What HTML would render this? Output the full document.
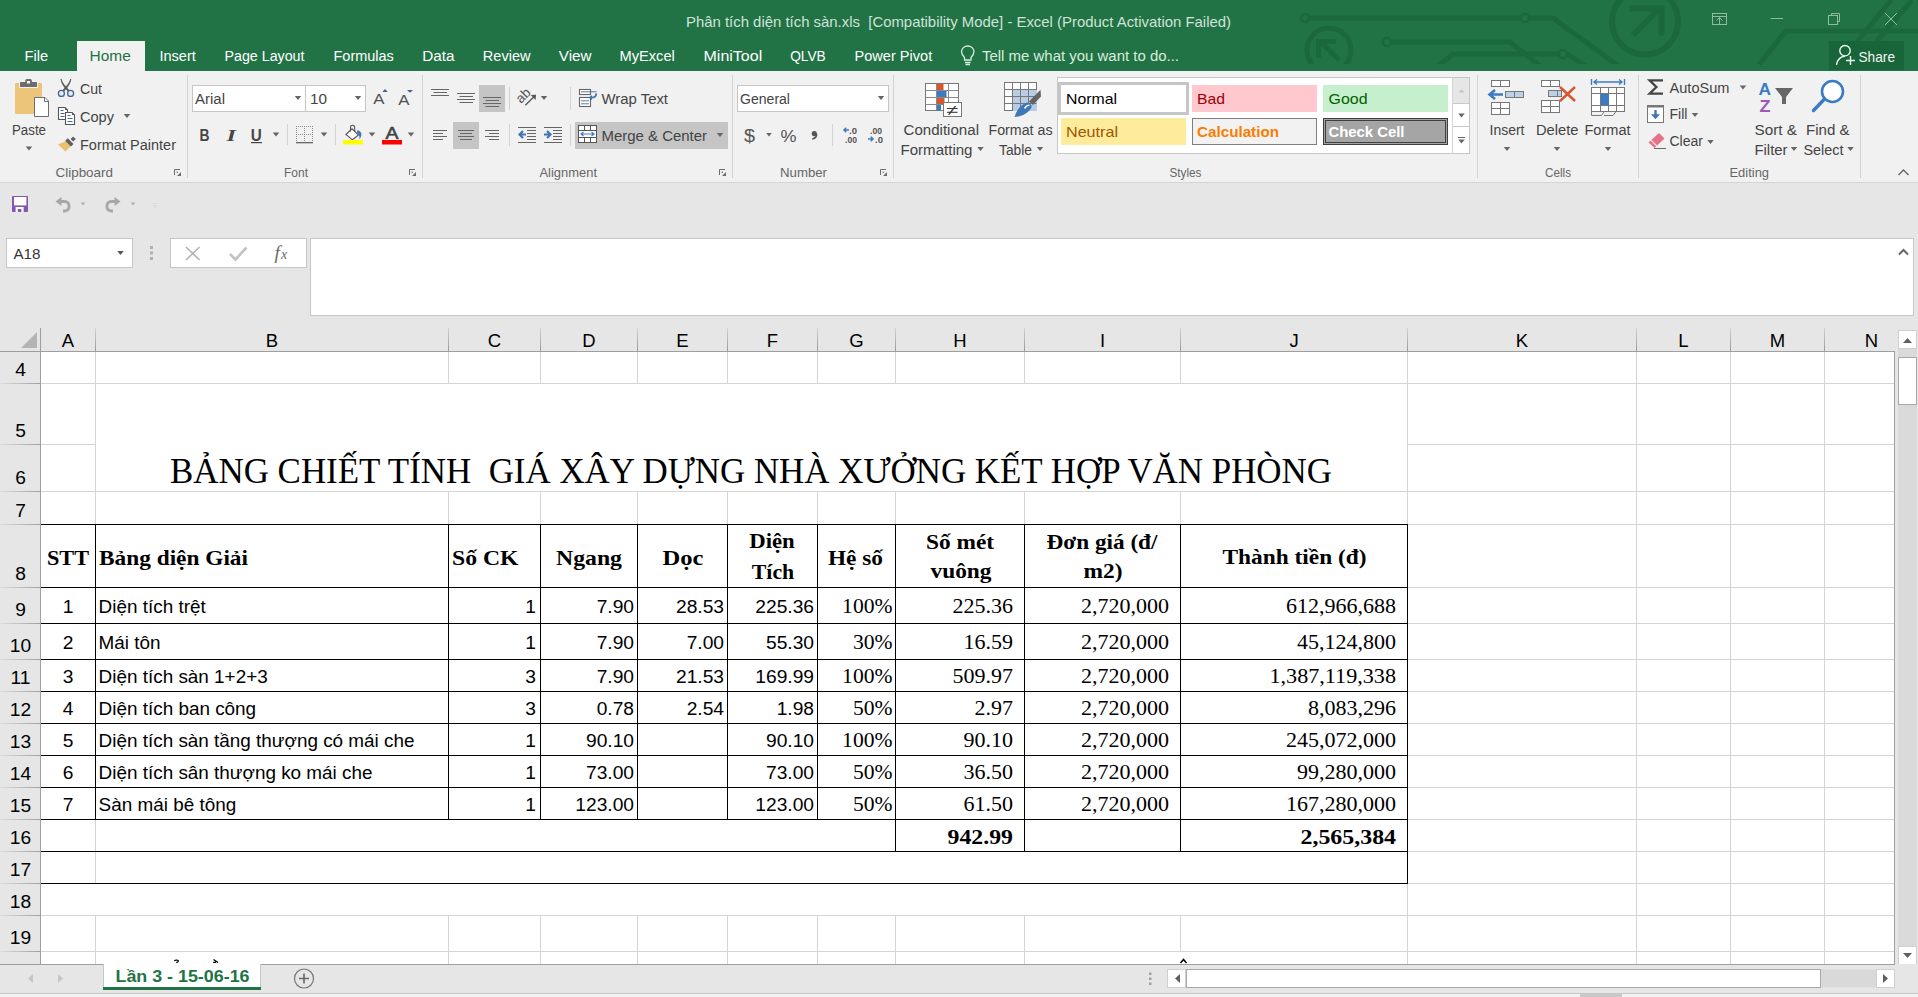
<!DOCTYPE html><html><head><meta charset="utf-8"><title>Excel</title><style>html,body{margin:0;padding:0;width:1918px;height:997px;overflow:hidden;background:#e6e6e6;font-family:"Liberation Sans",sans-serif}svg{display:block}</style></head><body><div id="app" style="position:relative;width:1918px;height:997px;overflow:hidden"><div id="titlebar" style="position:absolute;left:0px;top:0px;width:1918px;height:71px;background:#217346;overflow:hidden"><svg width="1918" height="71" viewBox="0 0 1918 71" font-family="'Liberation Sans', sans-serif"><g stroke="#1c683d" stroke-width="5" fill="none" stroke-linecap="butt"><path d="M1309 18H1521M1529 18H1553L1624 70"/><path d="M1391 42H1510L1545 70"/><path d="M1433 70L1453 54H1559M1567 54L1592 70"/><circle cx="1645" cy="21.5" r="33" stroke-width="6"/><circle cx="1329" cy="50" r="22"/><path d="M1757 67L1786 31H1918M1857 42L1891 0M1876 42L1912 0"/></g><g stroke="#1c683d" stroke-width="2.6" fill="none"><circle cx="1305" cy="18" r="4"/><circle cx="1525" cy="18" r="4"/><circle cx="1387" cy="42" r="4"/><circle cx="1563" cy="54" r="4"/></g><g stroke="#1c683d" fill="none" stroke-width="6"><path d="M1633 35L1659 9M1629.5 8.5H1661.5V35.5"/></g><g stroke="#1c683d" fill="none" stroke-width="5"><path d="M1339 60L1321 42M1318.5 58V41.5H1336"/></g><rect x="1290" y="64" width="470" height="7" fill="#217346" /><text x="686" y="27" font-size="15" fill="#d0e2d6" textLength="545" lengthAdjust="spacingAndGlyphs" style="white-space:pre">Phân tích diện tích sàn.xls  [Compatibility Mode] - Excel (Product Activation Failed)</text><g stroke="#8fbba0" stroke-width="1" fill="none"><rect x="1712.5" y="13.5" width="14" height="11"/><path d="M1712.5 16.5H1726.5M1719.5 24.5V17.5M1716.5 20.5L1719.5 17.5L1722.5 20.5"/><path d="M1770.5 18.5H1783"/><rect x="1828.5" y="15.5" width="9" height="9"/><path d="M1831.5 15.5V13.5H1839.5V21.5H1837.5"/><path d="M1885 13L1897 25M1897 13L1885 25"/></g><rect x="77" y="41" width="68" height="30" fill="#f1f1f1" /><text x="24.5" y="61.1" font-size="15.2" fill="#ffffff" textLength="23.7" lengthAdjust="spacingAndGlyphs">File</text><text x="89.5" y="61.1" font-size="15.2" fill="#217346" textLength="41.3" lengthAdjust="spacingAndGlyphs">Home</text><text x="159.5" y="61.1" font-size="15.2" fill="#ffffff" textLength="36.3" lengthAdjust="spacingAndGlyphs">Insert</text><text x="224.5" y="61.1" font-size="15.2" fill="#ffffff" textLength="80" lengthAdjust="spacingAndGlyphs">Page Layout</text><text x="333.5" y="61.1" font-size="15.2" fill="#ffffff" textLength="60.3" lengthAdjust="spacingAndGlyphs">Formulas</text><text x="422.2" y="61.1" font-size="15.2" fill="#ffffff" textLength="32.3" lengthAdjust="spacingAndGlyphs">Data</text><text x="482.8" y="61.1" font-size="15.2" fill="#ffffff" textLength="47.7" lengthAdjust="spacingAndGlyphs">Review</text><text x="558.8" y="61.1" font-size="15.2" fill="#ffffff" textLength="32.7" lengthAdjust="spacingAndGlyphs">View</text><text x="619.5" y="61.1" font-size="15.2" fill="#ffffff" textLength="55.3" lengthAdjust="spacingAndGlyphs">MyExcel</text><text x="703.5" y="61.1" font-size="15.2" fill="#ffffff" textLength="58.7" lengthAdjust="spacingAndGlyphs">MiniTool</text><text x="790.2" y="61.1" font-size="15.2" fill="#ffffff" textLength="35.6" lengthAdjust="spacingAndGlyphs">QLVB</text><text x="854.5" y="61.1" font-size="15.2" fill="#ffffff" textLength="77.7" lengthAdjust="spacingAndGlyphs">Power Pivot</text><g fill="none" stroke="#d8ecde" stroke-width="1.3"><path d="M964.5 60V57.5C962 55 961.5 53 961.5 51.5A6.3 6.3 0 0 1 974 51.5C974 53 973.5 55 971 57.5V60Z"/><path d="M965 62.5H970.5M965.5 64.5H970"/></g><text x="982" y="61.1" font-size="15.2" fill="#d8ecde" textLength="197" lengthAdjust="spacingAndGlyphs">Tell me what you want to do...</text><rect x="1829" y="41" width="75" height="29" fill="#19653a" /><g fill="none" stroke="#f0f7f2" stroke-width="1.4"><circle cx="1845" cy="50.7" r="5.2"/><path d="M1836.5 64.8C1837.5 59.5 1840.5 56.5 1845 56.3"/><path d="M1846 60.5H1855M1850.5 56V65"/></g><text x="1858.5" y="62" font-size="15.5" fill="#f0f7f2" textLength="36.5" lengthAdjust="spacingAndGlyphs">Share</text></svg></div><div id="ribbon" style="position:absolute;left:0px;top:71px;width:1918px;height:112px;background:#f1f1f1;overflow:hidden"><svg width="1918" height="112" viewBox="0 71 1918 112" font-family="'Liberation Sans', sans-serif"><rect x="0" y="182" width="1918" height="1" fill="#d5d5d5" /><rect x="187" y="75" width="1" height="103" fill="#d2d2d2" /><rect x="422" y="75" width="1" height="103" fill="#d2d2d2" /><rect x="732" y="75" width="1" height="103" fill="#d2d2d2" /><rect x="893" y="75" width="1" height="103" fill="#d2d2d2" /><rect x="1477" y="75" width="1" height="103" fill="#d2d2d2" /><rect x="1638" y="75" width="1" height="103" fill="#d2d2d2" /><rect x="1860" y="75" width="1" height="103" fill="#d2d2d2" /><rect x="15" y="83" width="27" height="31" fill="#ecc57a" rx="1"/><rect x="19" y="81" width="19" height="7" fill="#f1f1f1" /><rect x="20" y="82" width="17" height="5" fill="#6d6d6d" rx="0.5"/><rect x="25.3" y="79" width="6.5" height="4" fill="#6d6d6d" rx="1.5"/><rect x="27" y="81" width="3" height="2.5" fill="#f7f7f7" /><path d="M34.5 97.5H45L48.5 101V116.5H34.5Z" fill="#ffffff" stroke="#6d6d6d" stroke-width="1" /><path d="M44.5 97.5V101.5H48.5" fill="none" stroke="#6d6d6d" stroke-width="1" /><text x="12" y="134.5" font-size="14.9" fill="#444444" textLength="34" lengthAdjust="spacingAndGlyphs">Paste</text><path d="M25.745 146.5h6.510000000000001l-3.2550000000000003 4z" fill="#666" /><path d="M61 79C62 83 65 86 69.5 90.8L68.3 91.6C64.5 87.5 61.5 84 61 79Z" fill="#5a5a5a" stroke="#5a5a5a" stroke-width="0.8" /><path d="M70.8 79C69.8 83 66.8 86 62.3 90.8L63.5 91.6C67.3 87.5 70.3 84 70.8 79Z" fill="#5a5a5a" stroke="#5a5a5a" stroke-width="0.8" /><g fill="#ddeeff" stroke="#4b6787" stroke-width="1.3"><circle cx="61.4" cy="93.4" r="3"/><circle cx="70.6" cy="93.4" r="3"/></g><text x="80" y="94" font-size="14.9" fill="#444444" textLength="22" lengthAdjust="spacingAndGlyphs">Cut</text><g fill="#fff" stroke="#555" stroke-width="1.1"><path d="M58.5 107.5H65L67.5 110V119.5H58.5Z"/><path d="M65.5 112.5H72L74.5 115V124.5H65.5Z"/></g><path d="M65 107.5V110H67.5M72 112.5V115H74.5" fill="#555" /><path d="M60.5 110.5H63.5M60.5 113.5H64.5M60.5 116.5H64.5M67.5 115.5H70.5M67.5 118.5H72.5M67.5 121.5H72.5" fill="none" stroke="#4a6a90" stroke-width="1" /><text x="80" y="122" font-size="14.9" fill="#444444" textLength="34" lengthAdjust="spacingAndGlyphs">Copy</text><path d="M123.745 114h6.510000000000001l-3.2550000000000003 4z" fill="#666" /><path d="M66 141L71 146L65.5 151.5L58 144.5Z" fill="#e9c070" /><path d="M65.2 140.8L67.8 138.2L73.5 143.9L70.9 146.5Z" fill="#5f5f5f" /><path d="M70.6 139L73.2 136.4L75.8 139L73.2 141.6Z" fill="#5f5f5f" /><text x="80" y="150" font-size="14.9" fill="#444444" textLength="96" lengthAdjust="spacingAndGlyphs">Format Painter</text><text x="55.5" y="177" font-size="13.5" fill="#666666" textLength="57.5" lengthAdjust="spacingAndGlyphs">Clipboard</text><path d="M174.5 175V169.5H180" fill="none" stroke="#6d6d6d" stroke-width="1" /><path d="M177 176H181V172Z" fill="#6d6d6d" /><rect x="176.6" y="171.6" width="1.3" height="1.3" fill="#6d6d6d" /><rect x="192.5" y="85.5" width="113" height="26" fill="#ffffff" stroke="#c6c6c6" stroke-width="1"/><rect x="305.5" y="85.5" width="60" height="26" fill="#ffffff" stroke="#c6c6c6" stroke-width="1"/><text x="195" y="104" font-size="14.9" fill="#444444" textLength="30" lengthAdjust="spacingAndGlyphs">Arial</text><path d="M294.745 96h6.510000000000001l-3.2550000000000003 4z" fill="#666" /><text x="310" y="104" font-size="14.9" fill="#444444" textLength="17" lengthAdjust="spacingAndGlyphs">10</text><path d="M354.745 96h6.510000000000001l-3.2550000000000003 4z" fill="#666" /><text x="373.3" y="103.8" font-size="14.8" fill="#505050" textLength="11.2" lengthAdjust="spacingAndGlyphs">A</text><path d="M382.3 92L385 89L387.7 92Z" fill="#45609a" /><text x="398.3" y="104.8" font-size="14.8" fill="#505050" textLength="11.2" lengthAdjust="spacingAndGlyphs">A</text><path d="M407 90H413L410 92.8Z" fill="#45609a" /><text x="199.5" y="141" font-size="16.8" fill="#474747" font-weight="bold" textLength="10" lengthAdjust="spacingAndGlyphs">B</text><text x="226.5" y="141" font-size="16.8" fill="#474747" font-family="'Liberation Serif', serif" font-weight="bold" textLength="9.5" lengthAdjust="spacingAndGlyphs" font-style="italic">I</text><text x="250.8" y="140.6" font-size="16.8" fill="#474747" font-weight="bold" textLength="11" lengthAdjust="spacingAndGlyphs">U</text><rect x="251" y="142" width="11" height="1.2" fill="#444" /><path d="M272.745 132.5h6.510000000000001l-3.2550000000000003 4z" fill="#666" /><rect x="287" y="124" width="1" height="21" fill="#d2d2d2" /><path d="M296 126h1v1h-1zM296 126h1v1h-1zM312 126h1v1h-1zM304 126h1v1h-1zM296 134h1v1h-1zM298 126h1v1h-1zM296 128h1v1h-1zM312 128h1v1h-1zM304 128h1v1h-1zM298 134h1v1h-1zM300 126h1v1h-1zM296 130h1v1h-1zM312 130h1v1h-1zM304 130h1v1h-1zM300 134h1v1h-1zM302 126h1v1h-1zM296 132h1v1h-1zM312 132h1v1h-1zM304 132h1v1h-1zM302 134h1v1h-1zM304 126h1v1h-1zM296 134h1v1h-1zM312 134h1v1h-1zM304 134h1v1h-1zM304 134h1v1h-1zM306 126h1v1h-1zM296 136h1v1h-1zM312 136h1v1h-1zM304 136h1v1h-1zM306 134h1v1h-1zM308 126h1v1h-1zM296 138h1v1h-1zM312 138h1v1h-1zM304 138h1v1h-1zM308 134h1v1h-1zM310 126h1v1h-1zM296 140h1v1h-1zM312 140h1v1h-1zM304 140h1v1h-1zM310 134h1v1h-1zM312 126h1v1h-1zM296 142h1v1h-1zM312 142h1v1h-1zM304 142h1v1h-1zM312 134h1v1h-1z" fill="#8a8a8a" /><rect x="296" y="142" width="17" height="1.3" fill="#666" /><path d="M320.745 132.5h6.510000000000001l-3.2550000000000003 4z" fill="#666" /><rect x="335" y="124" width="1" height="21" fill="#d2d2d2" /><path d="M346 134.5L352 128.8L358.5 135L352.4 139.8Z" fill="#fff" stroke="#555" stroke-width="1.1" /><path d="M350.5 131.5V127.3A2.1 2.1 0 0 1 354.7 127.3V131.5" fill="none" stroke="#555" stroke-width="1.1" /><path d="M357.3 130.3C361.2 130.8 363 134.2 359.6 139.3C359.7 136.2 358.7 133.6 357 132.6Z" fill="#3f76b5" /><rect x="343" y="140" width="20" height="4.5" fill="#ffff00" /><path d="M368.745 132.5h6.510000000000001l-3.2550000000000003 4z" fill="#666" /><text x="385.5" y="138.6" font-size="17" fill="#444" textLength="13" lengthAdjust="spacingAndGlyphs" stroke="#444" stroke-width="0.6">A</text><rect x="382" y="140" width="20" height="4.5" fill="#ff0000" /><path d="M407.745 132.5h6.510000000000001l-3.2550000000000003 4z" fill="#666" /><text x="284" y="177" font-size="13.5" fill="#666666" textLength="24" lengthAdjust="spacingAndGlyphs">Font</text><path d="M409.5 175V169.5H415" fill="none" stroke="#6d6d6d" stroke-width="1" /><path d="M412 176H416V172Z" fill="#6d6d6d" /><rect x="411.6" y="171.6" width="1.3" height="1.3" fill="#6d6d6d" /><rect x="479" y="85" width="26" height="27" fill="#c5c5c5" /><rect x="453" y="122" width="26" height="27" fill="#c5c5c5" /><rect x="575" y="122" width="153" height="27" fill="#c5c5c5" /><rect x="431" y="89" width="18" height="1" fill="#666666" /><rect x="433.5" y="92" width="13.5" height="1" fill="#666666" /><rect x="431" y="95" width="18" height="1" fill="#666666" /><rect x="457" y="93" width="18" height="1" fill="#666666" /><rect x="459.5" y="96" width="13.5" height="1" fill="#666666" /><rect x="457" y="99" width="18" height="1" fill="#666666" /><rect x="459.5" y="102" width="13.5" height="1" fill="#666666" /><rect x="483" y="97" width="18" height="1" fill="#666666" /><rect x="485.5" y="100" width="13.5" height="1" fill="#666666" /><rect x="483" y="103" width="18" height="1" fill="#666666" /><rect x="485.5" y="106" width="13.5" height="1" fill="#666666" /><text x="515.5" y="100.2" font-size="13.5" fill="#555" textLength="15" lengthAdjust="spacingAndGlyphs" transform="rotate(-45 523 95.5)">ab</text><path d="M525.3 105.3L535.5 95.2" fill="none" stroke="#555" stroke-width="1.3" /><path d="M536 94.7L535.6 100L530.7 95.1Z" fill="#555" /><path d="M540.745 96h6.510000000000001l-3.2550000000000003 4z" fill="#666" /><rect x="509" y="87" width="1" height="23" fill="#d2d2d2" /><rect x="509" y="124" width="1" height="22" fill="#d2d2d2" /><rect x="570" y="87" width="1" height="23" fill="#d2d2d2" /><rect x="570" y="124" width="1" height="22" fill="#d2d2d2" /><rect x="433" y="130" width="14" height="1" fill="#666666" /><rect x="433" y="133" width="10" height="1" fill="#666666" /><rect x="433" y="136" width="14" height="1" fill="#666666" /><rect x="433" y="139" width="10" height="1" fill="#666666" /><rect x="458" y="130" width="16" height="1" fill="#666666" /><rect x="460" y="133" width="12" height="1" fill="#666666" /><rect x="458" y="136" width="16" height="1" fill="#666666" /><rect x="460" y="139" width="12" height="1" fill="#666666" /><rect x="485" y="130" width="14" height="1" fill="#666666" /><rect x="489" y="133" width="10" height="1" fill="#666666" /><rect x="485" y="136" width="14" height="1" fill="#666666" /><rect x="489" y="139" width="10" height="1" fill="#666666" /><rect x="518" y="127" width="18" height="1" fill="#666666" /><rect x="527" y="130" width="9" height="1" fill="#666666" /><rect x="527" y="133" width="9" height="1" fill="#666666" /><rect x="527" y="136" width="9" height="1" fill="#666666" /><rect x="527" y="139" width="9" height="1" fill="#666666" /><rect x="518" y="142" width="18" height="1" fill="#666666" /><path d="M526 134.5H520.5M523 131L519.5 134.5L523 138" fill="none" stroke="#3f76b5" stroke-width="2.2" /><rect x="544" y="127" width="18" height="1" fill="#666666" /><rect x="553" y="130" width="9" height="1" fill="#666666" /><rect x="553" y="133" width="9" height="1" fill="#666666" /><rect x="553" y="136" width="9" height="1" fill="#666666" /><rect x="553" y="139" width="9" height="1" fill="#666666" /><rect x="544" y="142" width="18" height="1" fill="#666666" /><path d="M544 134.5H549.5M547 131L550.5 134.5L547 138" fill="none" stroke="#3f76b5" stroke-width="2.2" /><g fill="#fff" stroke="#666" stroke-width="1.1"><rect x="579.5" y="89.5" width="11" height="5"/><rect x="579.5" y="97.5" width="11" height="9"/></g><path d="M581 91.8H596.5M581 100.8H589M581 103.8H589" fill="none" stroke="#4c6d94" stroke-width="0.9" /><path d="M596.2 93.5C596.2 96.2 594.5 97.6 591.5 97.6" fill="none" stroke="#3f76b5" stroke-width="1.8" /><path d="M588.8 97.6L592 95V100.2Z" fill="#3f76b5" /><text x="601.5" y="104" font-size="14.9" fill="#444444" textLength="66.5" lengthAdjust="spacingAndGlyphs">Wrap Text</text><g fill="#fff" stroke="#555" stroke-width="1"><rect x="578.5" y="125.5" width="18" height="17"/></g><g stroke="#555" stroke-width="1"><path d="M578.5 130.5H596.5M578.5 137.5H596.5M584.5 125.5V130.5M590.5 125.5V130.5M584.5 137.5V142.5M590.5 137.5V142.5"/></g><path d="M581 134H594M583.5 132L581 134L583.5 136M591.5 132L594 134L591.5 136" fill="none" stroke="#3d7cc9" stroke-width="1.2" /><text x="601.5" y="141" font-size="14.9" fill="#444444" textLength="105.5" lengthAdjust="spacingAndGlyphs">Merge &amp; Center</text><path d="M716.745 133h6.510000000000001l-3.2550000000000003 4z" fill="#666" /><text x="539.5" y="177" font-size="13.5" fill="#666666" textLength="57.5" lengthAdjust="spacingAndGlyphs">Alignment</text><path d="M719.5 175V169.5H725" fill="none" stroke="#6d6d6d" stroke-width="1" /><path d="M722 176H726V172Z" fill="#6d6d6d" /><rect x="721.6" y="171.6" width="1.3" height="1.3" fill="#6d6d6d" /><rect x="737.5" y="85.5" width="151" height="26" fill="#ffffff" stroke="#c6c6c6" stroke-width="1"/><text x="740" y="104" font-size="14.9" fill="#444444" textLength="50" lengthAdjust="spacingAndGlyphs">General</text><path d="M877.745 96h6.510000000000001l-3.2550000000000003 4z" fill="#666" /><text x="744" y="142" font-size="18" fill="#555" textLength="11" lengthAdjust="spacingAndGlyphs">$</text><path d="M766.21 133h5.58l-2.79 3.5z" fill="#666" /><text x="780.5" y="142" font-size="17" fill="#555" textLength="16" lengthAdjust="spacingAndGlyphs">%</text><circle cx="814.3" cy="133.6" r="2.6" fill="#555"/><path d="M816.6 134C816.8 136.5 815 138.3 812.3 139" fill="none" stroke="#555" stroke-width="1.6" /><rect x="832" y="124" width="1" height="22" fill="#d2d2d2" /><text x="849" y="133.5" font-size="9" fill="#555" font-weight="bold" textLength="8" lengthAdjust="spacingAndGlyphs">.0</text><text x="845" y="142.5" font-size="9" fill="#555" font-weight="bold" textLength="12" lengthAdjust="spacingAndGlyphs">.00</text><path d="M849 130H844M846.3 127.7L844 130L846.3 132.3" fill="none" stroke="#3d7cc9" stroke-width="1.6" /><text x="870" y="133.5" font-size="9" fill="#555" font-weight="bold" textLength="12" lengthAdjust="spacingAndGlyphs">.00</text><text x="875" y="142.5" font-size="9" fill="#555" font-weight="bold" textLength="8" lengthAdjust="spacingAndGlyphs">.0</text><path d="M868 139H873M870.7 136.7L873 139L870.7 141.3" fill="none" stroke="#3d7cc9" stroke-width="1.6" /><text x="780" y="177" font-size="13.5" fill="#666666" textLength="47" lengthAdjust="spacingAndGlyphs">Number</text><path d="M880.5 175V169.5H886" fill="none" stroke="#6d6d6d" stroke-width="1" /><path d="M883 176H887V172Z" fill="#6d6d6d" /><rect x="882.6" y="171.6" width="1.3" height="1.3" fill="#6d6d6d" /><rect x="925.5" y="83.5" width="33" height="27" fill="#fff" stroke="#777" stroke-width="1"/><rect x="936" y="84" width="7.5" height="6.5" fill="#d9552b" /><rect x="936" y="90.5" width="10.5" height="7" fill="#3b7bc4" /><rect x="936" y="97.5" width="8.5" height="7" fill="#d9552b" /><rect x="936" y="104.5" width="5" height="6" fill="#3b7bc4" /><g stroke="#8a8a8a" stroke-width="1"><path d="M936.5 83.5V110.5M948.5 83.5V110.5M925.5 90.5H958.5M925.5 97.5H958.5M925.5 104.5H958.5"/></g><rect x="943.5" y="102.5" width="18" height="14" fill="#fff" stroke="#777" stroke-width="1"/><text x="946.5" y="114.5" font-size="14" fill="#333" textLength="12" lengthAdjust="spacingAndGlyphs">≠</text><text x="903.5" y="134.5" font-size="14.9" fill="#444444" textLength="75.5" lengthAdjust="spacingAndGlyphs">Conditional</text><text x="900.5" y="154.5" font-size="14.9" fill="#444444" textLength="72" lengthAdjust="spacingAndGlyphs">Formatting</text><path d="M977.245 147h6.510000000000001l-3.2550000000000003 4z" fill="#666" /><rect x="1004.5" y="82.5" width="32" height="28" fill="#fff" stroke="#777" stroke-width="1"/><rect x="1013" y="90" width="24" height="21" fill="#b8cce4" /><g stroke="#777" stroke-width="1"><path d="M1012.5 82.5V110.5M1020.5 82.5V110.5M1028.5 82.5V110.5M1004.5 89.5H1036.5M1004.5 96.5H1036.5M1004.5 103.5H1036.5"/></g><rect x="1012.5" y="89.5" width="24" height="21" fill="none" stroke="#b8cce4" stroke-width="0"/><path d="M1029 101.5L1040.5 89.8L1041 96.5L1033 105Z" fill="#646464" /><path d="M1014.5 117C1016.5 110 1021 104.5 1027 102.5C1030.5 103 1032 105 1031.5 107.5C1028.5 113 1022 116.5 1014.5 117Z" fill="#3f76b5" /><path d="M1024.5 108.5C1026 106 1028 105 1029.5 105.5" fill="none" stroke="#fff" stroke-width="1.5" /><text x="988.5" y="134.5" font-size="14.9" fill="#444444" textLength="64" lengthAdjust="spacingAndGlyphs">Format as</text><text x="999" y="154.5" font-size="14.9" fill="#444444" textLength="33" lengthAdjust="spacingAndGlyphs">Table</text><path d="M1036.745 147h6.510000000000001l-3.2550000000000003 4z" fill="#666" /><rect x="1057.5" y="77.5" width="412" height="76" fill="#ffffff" stroke="#c6c6c6" stroke-width="1"/><rect x="1059.5" y="83.5" width="128" height="30" fill="none" stroke="#c6c6c6" stroke-width="3"/><text x="1066" y="104" font-size="15" fill="#000" textLength="51" lengthAdjust="spacingAndGlyphs">Normal</text><rect x="1192" y="85" width="125" height="27" fill="#ffc7ce" /><text x="1197" y="104" font-size="15" fill="#9c0006" textLength="28" lengthAdjust="spacingAndGlyphs">Bad</text><rect x="1323" y="85" width="125" height="27" fill="#c6efce" /><text x="1328.5" y="104" font-size="15" fill="#006100" textLength="39" lengthAdjust="spacingAndGlyphs">Good</text><rect x="1061" y="118" width="125" height="27" fill="#ffeb9c" /><text x="1066" y="136.7" font-size="15" fill="#9c5700" textLength="52" lengthAdjust="spacingAndGlyphs">Neutral</text><rect x="1192.5" y="118.5" width="124" height="26" fill="#f2f2f2" stroke="#7f7f7f" stroke-width="1"/><text x="1197" y="136.7" font-size="15" fill="#fa7d00" font-weight="bold" textLength="82" lengthAdjust="spacingAndGlyphs">Calculation</text><rect x="1323.5" y="118.5" width="124" height="26" fill="#a5a5a5" stroke="#3f3f3f" stroke-width="1"/><rect x="1325.5" y="120.5" width="120" height="22" fill="none" stroke="#3f3f3f" stroke-width="1"/><text x="1328.5" y="136.7" font-size="15" fill="#ffffff" font-weight="bold" textLength="76" lengthAdjust="spacingAndGlyphs">Check Cell</text><rect x="1452" y="77.5" width="1" height="76" fill="#d5d5d5" /><rect x="1453" y="78" width="16" height="25.5" fill="#e6e6e6" /><rect x="1453" y="103" width="16" height="1" fill="#c8c8c8" /><rect x="1453" y="126" width="16" height="1" fill="#c8c8c8" /><path d="M1458.5 92.5H1464.5L1461.5 89.5Z" fill="#c2c2c2" /><path d="M1458.245 113.5h6.510000000000001l-3.2550000000000003 4z" fill="#666" /><rect x="1458" y="137" width="7" height="1" fill="#666" /><path d="M1458.245 139.5h6.510000000000001l-3.2550000000000003 4z" fill="#666" /><text x="1169.5" y="177" font-size="13.5" fill="#666666" textLength="32" lengthAdjust="spacingAndGlyphs">Styles</text><g fill="#fff" stroke="#777" stroke-width="1"><rect x="1491.5" y="80.5" width="9" height="6"/><rect x="1500.5" y="80.5" width="9" height="6"/><rect x="1491.5" y="102.5" width="9" height="6"/><rect x="1500.5" y="102.5" width="9" height="6"/><rect x="1491.5" y="108.5" width="9" height="6"/><rect x="1500.5" y="108.5" width="9" height="6"/></g><g fill="#bcd0e8" stroke="#777" stroke-width="1"><rect x="1505.5" y="91.5" width="9" height="6"/><rect x="1514.5" y="91.5" width="9" height="6"/></g><path d="M1503 94.5H1491M1495 90L1489.5 94.5L1495 99" fill="none" stroke="#3b7bc4" stroke-width="2.6" /><text x="1489.5" y="134.5" font-size="14.9" fill="#444444" textLength="35" lengthAdjust="spacingAndGlyphs">Insert</text><path d="M1503.745 147h6.510000000000001l-3.2550000000000003 4z" fill="#666" /><g fill="#fff" stroke="#777" stroke-width="1"><rect x="1541.5" y="80.5" width="9" height="6"/><rect x="1550.5" y="80.5" width="9" height="6"/><rect x="1541.5" y="100.5" width="9" height="6"/><rect x="1550.5" y="100.5" width="9" height="6"/><rect x="1541.5" y="106.5" width="9" height="6"/><rect x="1550.5" y="106.5" width="9" height="6"/></g><g fill="#bcd0e8" stroke="#777" stroke-width="1"><rect x="1548.5" y="90.5" width="9" height="6"/><rect x="1557.5" y="90.5" width="4" height="6"/></g><path d="M1560 87L1575 101M1575 87L1560 101" fill="none" stroke="#d9552b" stroke-width="2.4" /><text x="1536" y="134.5" font-size="14.9" fill="#444444" textLength="42.5" lengthAdjust="spacingAndGlyphs">Delete</text><path d="M1553.745 147h6.510000000000001l-3.2550000000000003 4z" fill="#666" /><g fill="#fff" stroke="#777" stroke-width="1"><rect x="1591.5" y="87.5" width="33" height="24"/></g><g stroke="#777" stroke-width="1"><path d="M1600.5 87.5V111.5M1608.5 87.5V111.5M1616.5 87.5V111.5M1591.5 93.5H1624.5M1591.5 105.5H1624.5"/></g><rect x="1601" y="94" width="8" height="11" fill="#3b7bc4" /><path d="M1591.5 111.5V115.5H1601.5L1604 112M1604 115.5H1613L1616 111.5" fill="none" stroke="#777" stroke-width="1" /><path d="M1591.5 79V85M1624.5 79V85M1594 82H1622M1597 79.5L1594 82L1597 84.5M1619 79.5L1622 82L1619 84.5" fill="none" stroke="#3b7bc4" stroke-width="1.4" /><text x="1584.5" y="134.5" font-size="14.9" fill="#444444" textLength="46" lengthAdjust="spacingAndGlyphs">Format</text><path d="M1604.745 147h6.510000000000001l-3.2550000000000003 4z" fill="#666" /><text x="1545" y="177" font-size="13.5" fill="#666666" textLength="26" lengthAdjust="spacingAndGlyphs">Cells</text><path d="M1663 80.3H1649.6L1656.4 87L1649.6 93.7H1663" fill="none" stroke="#454545" stroke-width="2.3" stroke-linejoin="miter"/><text x="1669.5" y="93" font-size="14.8" fill="#444444" textLength="60" lengthAdjust="spacingAndGlyphs">AutoSum</text><path d="M1739.745 85.5h6.510000000000001l-3.2550000000000003 4z" fill="#666" /><rect x="1647.5" y="105.5" width="16" height="17" fill="#fff" stroke="#777" stroke-width="1"/><rect x="1647" y="105" width="17" height="2.5" fill="#777" /><rect x="1654.3" y="110" width="2.4" height="5" fill="#3f76b5" /><path d="M1651 114.3H1660L1655.5 119.2Z" fill="#3f76b5" /><text x="1669.5" y="119.2" font-size="14.9" fill="#444444" textLength="18" lengthAdjust="spacingAndGlyphs">Fill</text><path d="M1691.745 113h6.510000000000001l-3.2550000000000003 4z" fill="#666" /><path d="M1648.5 142.5L1659 133L1664.5 138.5L1654.5 148Z" fill="#e57388" /><path d="M1651 140.2L1656.8 146" fill="none" stroke="#fbe3e8" stroke-width="1.1" /><rect x="1654" y="148" width="12" height="1" fill="#666" /><text x="1669.5" y="146.3" font-size="14.9" fill="#444444" textLength="33.5" lengthAdjust="spacingAndGlyphs">Clear</text><path d="M1707.245 140h6.510000000000001l-3.2550000000000003 4z" fill="#666" /><text x="1758.5" y="95" font-size="16" fill="#3b7bc4" font-weight="bold" textLength="12.5" lengthAdjust="spacingAndGlyphs">A</text><text x="1759.5" y="112" font-size="16" fill="#9b59b6" font-weight="bold" textLength="11" lengthAdjust="spacingAndGlyphs">Z</text><path d="M1775 88H1793L1786 97V104H1782V97Z" fill="#666" /><text x="1754.5" y="135" font-size="14.9" fill="#444444" textLength="42.5" lengthAdjust="spacingAndGlyphs">Sort &amp;</text><text x="1754.5" y="154.5" font-size="14.9" fill="#444444" textLength="33" lengthAdjust="spacingAndGlyphs">Filter</text><path d="M1790.745 147h6.510000000000001l-3.2550000000000003 4z" fill="#666" /><circle cx="1832.5" cy="91.5" r="10.5" fill="#fff" stroke="#3b7bc4" stroke-width="2.6"/><path d="M1824.5 99L1813.5 110.5" fill="none" stroke="#3b7bc4" stroke-width="3.4" stroke-linecap="round"/><text x="1806" y="135" font-size="14.9" fill="#444444" textLength="43.5" lengthAdjust="spacingAndGlyphs">Find &amp;</text><text x="1803.5" y="154.5" font-size="14.9" fill="#444444" textLength="40" lengthAdjust="spacingAndGlyphs">Select</text><path d="M1847.245 147h6.510000000000001l-3.2550000000000003 4z" fill="#666" /><text x="1729.5" y="177" font-size="13.5" fill="#666666" textLength="39.5" lengthAdjust="spacingAndGlyphs">Editing</text><path d="M1898.5 175L1903.5 170L1908.5 175" fill="none" stroke="#666" stroke-width="1.4" /></svg></div><div id="formulabar" style="position:absolute;left:0px;top:183px;width:1918px;height:145px;background:#e6e6e6;overflow:hidden"><svg width="1918" height="145" viewBox="0 183 1918 145" font-family="'Liberation Sans', sans-serif"><rect x="12" y="196" width="16" height="16" fill="#8459ad" rx="0.8"/><rect x="14" y="197" width="12.4" height="8.4" fill="#ffffff" /><rect x="15.6" y="207" width="8" height="5" fill="#ffffff" /><rect x="17.8" y="209" width="3.6" height="3" fill="#8459ad" /><path d="M57.5 201.5H65A4.8 4.8 0 0 1 65 211H63" fill="none" stroke="#a8a8a8" stroke-width="2.8" /><path d="M61.5 197L55.5 201.5L61.5 206Z" fill="#a8a8a8" /><path d="M80.675 202.5h4.65l-2.325 3z" fill="#b0b0b0" /><path d="M118.5 201.5H111A4.8 4.8 0 0 0 111 211H113" fill="none" stroke="#a8a8a8" stroke-width="2.8" /><path d="M114.5 197L120.5 201.5L114.5 206Z" fill="#a8a8a8" /><path d="M130.675 202.5h4.65l-2.325 3z" fill="#b0b0b0" /><rect x="152" y="203" width="6" height="1" fill="#dadada" /><path d="M152.675 205h4.65l-2.325 3z" fill="#dadada" /><rect x="6.5" y="238.5" width="126" height="29" fill="#ffffff" stroke="#c6c6c6" stroke-width="1"/><text x="13.5" y="259" font-size="15" fill="#333" textLength="27" lengthAdjust="spacingAndGlyphs">A18</text><path d="M117.245 251h6.510000000000001l-3.2550000000000003 4z" fill="#555" /><rect x="150" y="246" width="3" height="3" fill="#b0b0b0" /><rect x="150" y="251.5" width="3" height="3" fill="#b0b0b0" /><rect x="150" y="257" width="3" height="3" fill="#b0b0b0" /><rect x="170.5" y="238.5" width="136" height="29" fill="#ffffff" stroke="#c6c6c6" stroke-width="1"/><path d="M186 247L199.5 260M199.5 247L186 260" fill="none" stroke="#b0b0b0" stroke-width="1.5" /><path d="M230 254L235.5 259.5L246.5 247.5" fill="none" stroke="#c2c2c2" stroke-width="2.6" /><text x="274.5" y="258.5" font-size="19.5" fill="#6a6a6a" font-family="'Liberation Serif', serif" font-style="italic">f</text><text x="281" y="258.5" font-size="14" fill="#6a6a6a" font-family="'Liberation Serif', serif" font-style="italic">x</text><rect x="310.5" y="238.5" width="1603" height="77" fill="#ffffff" stroke="#c6c6c6" stroke-width="1"/><path d="M1899 254.5L1903.5 250L1908 254.5" fill="none" stroke="#666" stroke-width="2" /></svg></div><div id="grid" style="position:absolute;left:0px;top:328px;width:1918px;height:636px;background:#e6e6e6;overflow:hidden"><svg width="1918" height="636" viewBox="0 328 1918 636" font-family="'Liberation Sans', sans-serif"><rect x="41" y="352" width="1853" height="612" fill="#ffffff" /><rect x="41" y="383" width="1853" height="1" fill="#d4d4d4" /><rect x="41" y="444" width="1853" height="1" fill="#d4d4d4" /><rect x="41" y="491" width="1853" height="1" fill="#d4d4d4" /><rect x="41" y="524" width="1853" height="1" fill="#d4d4d4" /><rect x="41" y="587" width="1853" height="1" fill="#d4d4d4" /><rect x="41" y="623" width="1853" height="1" fill="#d4d4d4" /><rect x="41" y="659" width="1853" height="1" fill="#d4d4d4" /><rect x="41" y="691" width="1853" height="1" fill="#d4d4d4" /><rect x="41" y="723" width="1853" height="1" fill="#d4d4d4" /><rect x="41" y="755" width="1853" height="1" fill="#d4d4d4" /><rect x="41" y="787" width="1853" height="1" fill="#d4d4d4" /><rect x="41" y="819" width="1853" height="1" fill="#d4d4d4" /><rect x="41" y="851" width="1853" height="1" fill="#d4d4d4" /><rect x="41" y="883" width="1853" height="1" fill="#d4d4d4" /><rect x="41" y="915" width="1853" height="1" fill="#d4d4d4" /><rect x="41" y="951" width="1853" height="1" fill="#d4d4d4" /><rect x="95" y="352" width="1" height="612" fill="#d4d4d4" /><rect x="448" y="352" width="1" height="612" fill="#d4d4d4" /><rect x="540" y="352" width="1" height="612" fill="#d4d4d4" /><rect x="637" y="352" width="1" height="612" fill="#d4d4d4" /><rect x="727" y="352" width="1" height="612" fill="#d4d4d4" /><rect x="817" y="352" width="1" height="612" fill="#d4d4d4" /><rect x="895" y="352" width="1" height="612" fill="#d4d4d4" /><rect x="1024" y="352" width="1" height="612" fill="#d4d4d4" /><rect x="1180" y="352" width="1" height="612" fill="#d4d4d4" /><rect x="1407" y="352" width="1" height="612" fill="#d4d4d4" /><rect x="1636" y="352" width="1" height="612" fill="#d4d4d4" /><rect x="1730" y="352" width="1" height="612" fill="#d4d4d4" /><rect x="1824" y="352" width="1" height="612" fill="#d4d4d4" /><rect x="96" y="384" width="1311" height="107" fill="#ffffff" /><rect x="41" y="384" width="54" height="60" fill="#ffffff" /><rect x="41" y="445" width="54" height="46" fill="#ffffff" /><rect x="96" y="820" width="799" height="31" fill="#ffffff" /><rect x="96" y="852" width="1311" height="31" fill="#ffffff" /><rect x="41" y="884" width="1366" height="31" fill="#ffffff" /><rect x="40" y="524" width="1368" height="1" fill="#000000" /><rect x="40" y="587" width="1368" height="1" fill="#000000" /><rect x="40" y="623" width="1368" height="1" fill="#000000" /><rect x="40" y="659" width="1368" height="1" fill="#000000" /><rect x="40" y="691" width="1368" height="1" fill="#000000" /><rect x="40" y="723" width="1368" height="1" fill="#000000" /><rect x="40" y="755" width="1368" height="1" fill="#000000" /><rect x="40" y="787" width="1368" height="1" fill="#000000" /><rect x="40" y="819" width="1368" height="1" fill="#000000" /><rect x="40" y="851" width="1368" height="1" fill="#000000" /><rect x="40" y="883" width="1368" height="1" fill="#000000" /><rect x="40" y="883" width="1368" height="1" fill="#000000" /><rect x="95" y="524" width="1" height="296" fill="#000000" /><rect x="448" y="524" width="1" height="296" fill="#000000" /><rect x="540" y="524" width="1" height="296" fill="#000000" /><rect x="637" y="524" width="1" height="296" fill="#000000" /><rect x="727" y="524" width="1" height="296" fill="#000000" /><rect x="817" y="524" width="1" height="296" fill="#000000" /><rect x="895" y="524" width="1" height="296" fill="#000000" /><rect x="1024" y="524" width="1" height="296" fill="#000000" /><rect x="1180" y="524" width="1" height="296" fill="#000000" /><rect x="1407" y="524" width="1" height="296" fill="#000000" /><rect x="895" y="819" width="1" height="33" fill="#000000" /><rect x="1024" y="819" width="1" height="33" fill="#000000" /><rect x="1180" y="819" width="1" height="33" fill="#000000" /><rect x="1407" y="819" width="1" height="33" fill="#000000" /><rect x="1407" y="851" width="1" height="33" fill="#000000" /><defs><linearGradient id="hsep" x1="0" y1="0" x2="0" y2="1"><stop offset="0" stop-color="#d0d0d0"/><stop offset="1" stop-color="#9a9a9a"/></linearGradient><linearGradient id="rsep" x1="0" y1="0" x2="1" y2="0"><stop offset="0" stop-color="#dcdcdc"/><stop offset="1" stop-color="#a0a0a0"/></linearGradient></defs><rect x="40" y="328" width="1" height="23" fill="url(#hsep)" /><rect x="95" y="328" width="1" height="23" fill="url(#hsep)" /><rect x="448" y="328" width="1" height="23" fill="url(#hsep)" /><rect x="540" y="328" width="1" height="23" fill="url(#hsep)" /><rect x="637" y="328" width="1" height="23" fill="url(#hsep)" /><rect x="727" y="328" width="1" height="23" fill="url(#hsep)" /><rect x="817" y="328" width="1" height="23" fill="url(#hsep)" /><rect x="895" y="328" width="1" height="23" fill="url(#hsep)" /><rect x="1024" y="328" width="1" height="23" fill="url(#hsep)" /><rect x="1180" y="328" width="1" height="23" fill="url(#hsep)" /><rect x="1407" y="328" width="1" height="23" fill="url(#hsep)" /><rect x="1636" y="328" width="1" height="23" fill="url(#hsep)" /><rect x="1730" y="328" width="1" height="23" fill="url(#hsep)" /><rect x="1824" y="328" width="1" height="23" fill="url(#hsep)" /><rect x="0" y="351" width="1895" height="1" fill="#9f9f9f" /><rect x="40" y="328" width="1" height="636" fill="#9f9f9f" /><rect x="1894" y="351" width="1" height="613" fill="#9f9f9f" /><path d="M21 348H37V332Z" fill="#b4b4b4" /><text x="68.0" y="347" font-size="18.5" fill="#000" text-anchor="middle">A</text><text x="272.0" y="347" font-size="18.5" fill="#000" text-anchor="middle">B</text><text x="494.5" y="347" font-size="18.5" fill="#000" text-anchor="middle">C</text><text x="589.0" y="347" font-size="18.5" fill="#000" text-anchor="middle">D</text><text x="682.5" y="347" font-size="18.5" fill="#000" text-anchor="middle">E</text><text x="772.5" y="347" font-size="18.5" fill="#000" text-anchor="middle">F</text><text x="856.5" y="347" font-size="18.5" fill="#000" text-anchor="middle">G</text><text x="960.0" y="347" font-size="18.5" fill="#000" text-anchor="middle">H</text><text x="1102.5" y="347" font-size="18.5" fill="#000" text-anchor="middle">I</text><text x="1294.0" y="347" font-size="18.5" fill="#000" text-anchor="middle">J</text><text x="1522.0" y="347" font-size="18.5" fill="#000" text-anchor="middle">K</text><text x="1683.5" y="347" font-size="18.5" fill="#000" text-anchor="middle">L</text><text x="1777.5" y="347" font-size="18.5" fill="#000" text-anchor="middle">M</text><text x="1871.5" y="347" font-size="18.5" fill="#000" text-anchor="middle">N</text><rect x="0" y="383" width="40" height="1" fill="url(#rsep)" /><text x="20.5" y="375.6" font-size="19.2" fill="#000" text-anchor="middle">4</text><rect x="0" y="444" width="40" height="1" fill="url(#rsep)" /><text x="20.5" y="436.6" font-size="19.2" fill="#000" text-anchor="middle">5</text><rect x="0" y="491" width="40" height="1" fill="url(#rsep)" /><text x="20.5" y="483.6" font-size="19.2" fill="#000" text-anchor="middle">6</text><rect x="0" y="524" width="40" height="1" fill="url(#rsep)" /><text x="20.5" y="516.6" font-size="19.2" fill="#000" text-anchor="middle">7</text><rect x="0" y="587" width="40" height="1" fill="url(#rsep)" /><text x="20.5" y="579.6" font-size="19.2" fill="#000" text-anchor="middle">8</text><rect x="0" y="623" width="40" height="1" fill="url(#rsep)" /><text x="20.5" y="615.6" font-size="19.2" fill="#000" text-anchor="middle">9</text><rect x="0" y="659" width="40" height="1" fill="url(#rsep)" /><text x="20.5" y="651.6" font-size="19.2" fill="#000" text-anchor="middle">10</text><rect x="0" y="691" width="40" height="1" fill="url(#rsep)" /><text x="20.5" y="683.6" font-size="19.2" fill="#000" text-anchor="middle">11</text><rect x="0" y="723" width="40" height="1" fill="url(#rsep)" /><text x="20.5" y="715.6" font-size="19.2" fill="#000" text-anchor="middle">12</text><rect x="0" y="755" width="40" height="1" fill="url(#rsep)" /><text x="20.5" y="747.6" font-size="19.2" fill="#000" text-anchor="middle">13</text><rect x="0" y="787" width="40" height="1" fill="url(#rsep)" /><text x="20.5" y="779.6" font-size="19.2" fill="#000" text-anchor="middle">14</text><rect x="0" y="819" width="40" height="1" fill="url(#rsep)" /><text x="20.5" y="811.6" font-size="19.2" fill="#000" text-anchor="middle">15</text><rect x="0" y="851" width="40" height="1" fill="url(#rsep)" /><text x="20.5" y="843.6" font-size="19.2" fill="#000" text-anchor="middle">16</text><rect x="0" y="883" width="40" height="1" fill="url(#rsep)" /><text x="20.5" y="875.6" font-size="19.2" fill="#000" text-anchor="middle">17</text><rect x="0" y="915" width="40" height="1" fill="url(#rsep)" /><text x="20.5" y="907.6" font-size="19.2" fill="#000" text-anchor="middle">18</text><rect x="0" y="951" width="40" height="1" fill="url(#rsep)" /><text x="20.5" y="943.6" font-size="19.2" fill="#000" text-anchor="middle">19</text><text x="751" y="483" font-size="35.5" fill="#000" font-family="'Liberation Serif', serif" text-anchor="middle" textLength="1162" lengthAdjust="spacingAndGlyphs" style="white-space:pre">BẢNG CHIẾT TÍNH  GIÁ XÂY DỰNG NHÀ XƯỞNG KẾT HỢP VĂN PHÒNG</text><text x="47" y="565" font-size="21.5" fill="#000" font-family="'Liberation Serif', serif" font-weight="bold" textLength="42" lengthAdjust="spacingAndGlyphs">STT</text><text x="99" y="565" font-size="21.5" fill="#000" font-family="'Liberation Serif', serif" font-weight="bold" textLength="149" lengthAdjust="spacingAndGlyphs">Bảng diện Giải</text><text x="452" y="565" font-size="21.5" fill="#000" font-family="'Liberation Serif', serif" font-weight="bold" textLength="66.5" lengthAdjust="spacingAndGlyphs">Số CK</text><text x="589" y="565" font-size="21.5" fill="#000" font-family="'Liberation Serif', serif" font-weight="bold" text-anchor="middle" textLength="66" lengthAdjust="spacingAndGlyphs">Ngang</text><text x="683" y="565" font-size="21.5" fill="#000" font-family="'Liberation Serif', serif" font-weight="bold" text-anchor="middle" textLength="41" lengthAdjust="spacingAndGlyphs">Dọc</text><text x="772" y="548" font-size="21.5" fill="#000" font-family="'Liberation Serif', serif" font-weight="bold" text-anchor="middle" textLength="45.5" lengthAdjust="spacingAndGlyphs">Diện</text><text x="773" y="578.5" font-size="21.5" fill="#000" font-family="'Liberation Serif', serif" font-weight="bold" text-anchor="middle" textLength="42.5" lengthAdjust="spacingAndGlyphs">Tích</text><text x="855.5" y="565" font-size="21.5" fill="#000" font-family="'Liberation Serif', serif" font-weight="bold" text-anchor="middle" textLength="55" lengthAdjust="spacingAndGlyphs">Hệ số</text><text x="960" y="548.5" font-size="21.5" fill="#000" font-family="'Liberation Serif', serif" font-weight="bold" text-anchor="middle" textLength="68" lengthAdjust="spacingAndGlyphs">Số mét</text><text x="961" y="578" font-size="21.5" fill="#000" font-family="'Liberation Serif', serif" font-weight="bold" text-anchor="middle" textLength="61" lengthAdjust="spacingAndGlyphs">vuông</text><text x="1102" y="548.5" font-size="21.5" fill="#000" font-family="'Liberation Serif', serif" font-weight="bold" text-anchor="middle" textLength="111" lengthAdjust="spacingAndGlyphs">Đơn giá (đ/</text><text x="1103" y="578" font-size="21.5" fill="#000" font-family="'Liberation Serif', serif" font-weight="bold" text-anchor="middle" textLength="39" lengthAdjust="spacingAndGlyphs">m2)</text><text x="1294.5" y="563.5" font-size="21.5" fill="#000" font-family="'Liberation Serif', serif" font-weight="bold" text-anchor="middle" textLength="144" lengthAdjust="spacingAndGlyphs">Thành tiền (đ)</text><text x="68" y="612.7" font-size="19.2" fill="#000" text-anchor="middle">1</text><text x="98.6" y="612.7" font-size="18.9" fill="#000">Diện tích trệt</text><text x="536" y="612.7" font-size="19.2" fill="#000" text-anchor="end" textLength="10.68" lengthAdjust="spacingAndGlyphs">1</text><text x="634" y="612.7" font-size="19.2" fill="#000" text-anchor="end" textLength="37.36" lengthAdjust="spacingAndGlyphs">7.90</text><text x="724" y="612.7" font-size="19.2" fill="#000" text-anchor="end" textLength="48.04" lengthAdjust="spacingAndGlyphs">28.53</text><text x="814" y="612.7" font-size="19.2" fill="#000" text-anchor="end" textLength="58.71" lengthAdjust="spacingAndGlyphs">225.36</text><text x="892.5" y="613.1" font-size="21.33" fill="#000" font-family="'Liberation Serif', serif" text-anchor="end" textLength="50.39" lengthAdjust="spacingAndGlyphs">100%</text><text x="1013" y="613.1" font-size="21.33" fill="#000" font-family="'Liberation Serif', serif" text-anchor="end" textLength="60.5" lengthAdjust="spacingAndGlyphs">225.36</text><text x="1169" y="613.1" font-size="21.33" fill="#000" font-family="'Liberation Serif', serif" text-anchor="end" textLength="88.0" lengthAdjust="spacingAndGlyphs">2,720,000</text><text x="1396" y="613.1" font-size="21.33" fill="#000" font-family="'Liberation Serif', serif" text-anchor="end" textLength="110.0" lengthAdjust="spacingAndGlyphs">612,966,688</text><text x="68" y="648.7" font-size="19.2" fill="#000" text-anchor="middle">2</text><text x="98.6" y="648.7" font-size="18.9" fill="#000">Mái tôn</text><text x="536" y="648.7" font-size="19.2" fill="#000" text-anchor="end" textLength="10.68" lengthAdjust="spacingAndGlyphs">1</text><text x="634" y="648.7" font-size="19.2" fill="#000" text-anchor="end" textLength="37.36" lengthAdjust="spacingAndGlyphs">7.90</text><text x="724" y="648.7" font-size="19.2" fill="#000" text-anchor="end" textLength="37.36" lengthAdjust="spacingAndGlyphs">7.00</text><text x="814" y="648.7" font-size="19.2" fill="#000" text-anchor="end" textLength="48.04" lengthAdjust="spacingAndGlyphs">55.30</text><text x="892.5" y="649.1" font-size="21.33" fill="#000" font-family="'Liberation Serif', serif" text-anchor="end" textLength="39.59" lengthAdjust="spacingAndGlyphs">30%</text><text x="1013" y="649.1" font-size="21.33" fill="#000" font-family="'Liberation Serif', serif" text-anchor="end" textLength="49.5" lengthAdjust="spacingAndGlyphs">16.59</text><text x="1169" y="649.1" font-size="21.33" fill="#000" font-family="'Liberation Serif', serif" text-anchor="end" textLength="88.0" lengthAdjust="spacingAndGlyphs">2,720,000</text><text x="1396" y="649.1" font-size="21.33" fill="#000" font-family="'Liberation Serif', serif" text-anchor="end" textLength="99.0" lengthAdjust="spacingAndGlyphs">45,124,800</text><text x="68" y="682.7" font-size="19.2" fill="#000" text-anchor="middle">3</text><text x="98.6" y="682.7" font-size="18.9" fill="#000">Diện tích sàn 1+2+3</text><text x="536" y="682.7" font-size="19.2" fill="#000" text-anchor="end" textLength="10.68" lengthAdjust="spacingAndGlyphs">3</text><text x="634" y="682.7" font-size="19.2" fill="#000" text-anchor="end" textLength="37.36" lengthAdjust="spacingAndGlyphs">7.90</text><text x="724" y="682.7" font-size="19.2" fill="#000" text-anchor="end" textLength="48.04" lengthAdjust="spacingAndGlyphs">21.53</text><text x="814" y="682.7" font-size="19.2" fill="#000" text-anchor="end" textLength="58.71" lengthAdjust="spacingAndGlyphs">169.99</text><text x="892.5" y="683.1" font-size="21.33" fill="#000" font-family="'Liberation Serif', serif" text-anchor="end" textLength="50.39" lengthAdjust="spacingAndGlyphs">100%</text><text x="1013" y="683.1" font-size="21.33" fill="#000" font-family="'Liberation Serif', serif" text-anchor="end" textLength="60.5" lengthAdjust="spacingAndGlyphs">509.97</text><text x="1169" y="683.1" font-size="21.33" fill="#000" font-family="'Liberation Serif', serif" text-anchor="end" textLength="88.0" lengthAdjust="spacingAndGlyphs">2,720,000</text><text x="1396" y="683.1" font-size="21.33" fill="#000" font-family="'Liberation Serif', serif" text-anchor="end" textLength="126.5" lengthAdjust="spacingAndGlyphs">1,387,119,338</text><text x="68" y="714.7" font-size="19.2" fill="#000" text-anchor="middle">4</text><text x="98.6" y="714.7" font-size="18.9" fill="#000">Diện tích ban công</text><text x="536" y="714.7" font-size="19.2" fill="#000" text-anchor="end" textLength="10.68" lengthAdjust="spacingAndGlyphs">3</text><text x="634" y="714.7" font-size="19.2" fill="#000" text-anchor="end" textLength="37.36" lengthAdjust="spacingAndGlyphs">0.78</text><text x="724" y="714.7" font-size="19.2" fill="#000" text-anchor="end" textLength="37.36" lengthAdjust="spacingAndGlyphs">2.54</text><text x="814" y="714.7" font-size="19.2" fill="#000" text-anchor="end" textLength="37.36" lengthAdjust="spacingAndGlyphs">1.98</text><text x="892.5" y="715.1" font-size="21.33" fill="#000" font-family="'Liberation Serif', serif" text-anchor="end" textLength="39.59" lengthAdjust="spacingAndGlyphs">50%</text><text x="1013" y="715.1" font-size="21.33" fill="#000" font-family="'Liberation Serif', serif" text-anchor="end" textLength="38.5" lengthAdjust="spacingAndGlyphs">2.97</text><text x="1169" y="715.1" font-size="21.33" fill="#000" font-family="'Liberation Serif', serif" text-anchor="end" textLength="88.0" lengthAdjust="spacingAndGlyphs">2,720,000</text><text x="1396" y="715.1" font-size="21.33" fill="#000" font-family="'Liberation Serif', serif" text-anchor="end" textLength="88.0" lengthAdjust="spacingAndGlyphs">8,083,296</text><text x="68" y="746.7" font-size="19.2" fill="#000" text-anchor="middle">5</text><text x="98.6" y="746.7" font-size="18.9" fill="#000">Diện tích sàn tầng thượng có mái che</text><text x="536" y="746.7" font-size="19.2" fill="#000" text-anchor="end" textLength="10.68" lengthAdjust="spacingAndGlyphs">1</text><text x="634" y="746.7" font-size="19.2" fill="#000" text-anchor="end" textLength="48.04" lengthAdjust="spacingAndGlyphs">90.10</text><text x="814" y="746.7" font-size="19.2" fill="#000" text-anchor="end" textLength="48.04" lengthAdjust="spacingAndGlyphs">90.10</text><text x="892.5" y="747.1" font-size="21.33" fill="#000" font-family="'Liberation Serif', serif" text-anchor="end" textLength="50.39" lengthAdjust="spacingAndGlyphs">100%</text><text x="1013" y="747.1" font-size="21.33" fill="#000" font-family="'Liberation Serif', serif" text-anchor="end" textLength="49.5" lengthAdjust="spacingAndGlyphs">90.10</text><text x="1169" y="747.1" font-size="21.33" fill="#000" font-family="'Liberation Serif', serif" text-anchor="end" textLength="88.0" lengthAdjust="spacingAndGlyphs">2,720,000</text><text x="1396" y="747.1" font-size="21.33" fill="#000" font-family="'Liberation Serif', serif" text-anchor="end" textLength="110.0" lengthAdjust="spacingAndGlyphs">245,072,000</text><text x="68" y="778.7" font-size="19.2" fill="#000" text-anchor="middle">6</text><text x="98.6" y="778.7" font-size="18.9" fill="#000">Diện tích sân thượng ko mái che</text><text x="536" y="778.7" font-size="19.2" fill="#000" text-anchor="end" textLength="10.68" lengthAdjust="spacingAndGlyphs">1</text><text x="634" y="778.7" font-size="19.2" fill="#000" text-anchor="end" textLength="48.04" lengthAdjust="spacingAndGlyphs">73.00</text><text x="814" y="778.7" font-size="19.2" fill="#000" text-anchor="end" textLength="48.04" lengthAdjust="spacingAndGlyphs">73.00</text><text x="892.5" y="779.1" font-size="21.33" fill="#000" font-family="'Liberation Serif', serif" text-anchor="end" textLength="39.59" lengthAdjust="spacingAndGlyphs">50%</text><text x="1013" y="779.1" font-size="21.33" fill="#000" font-family="'Liberation Serif', serif" text-anchor="end" textLength="49.5" lengthAdjust="spacingAndGlyphs">36.50</text><text x="1169" y="779.1" font-size="21.33" fill="#000" font-family="'Liberation Serif', serif" text-anchor="end" textLength="88.0" lengthAdjust="spacingAndGlyphs">2,720,000</text><text x="1396" y="779.1" font-size="21.33" fill="#000" font-family="'Liberation Serif', serif" text-anchor="end" textLength="99.0" lengthAdjust="spacingAndGlyphs">99,280,000</text><text x="68" y="810.7" font-size="19.2" fill="#000" text-anchor="middle">7</text><text x="98.6" y="810.7" font-size="18.9" fill="#000">Sàn mái bê tông</text><text x="536" y="810.7" font-size="19.2" fill="#000" text-anchor="end" textLength="10.68" lengthAdjust="spacingAndGlyphs">1</text><text x="634" y="810.7" font-size="19.2" fill="#000" text-anchor="end" textLength="58.71" lengthAdjust="spacingAndGlyphs">123.00</text><text x="814" y="810.7" font-size="19.2" fill="#000" text-anchor="end" textLength="58.71" lengthAdjust="spacingAndGlyphs">123.00</text><text x="892.5" y="811.1" font-size="21.33" fill="#000" font-family="'Liberation Serif', serif" text-anchor="end" textLength="39.59" lengthAdjust="spacingAndGlyphs">50%</text><text x="1013" y="811.1" font-size="21.33" fill="#000" font-family="'Liberation Serif', serif" text-anchor="end" textLength="49.5" lengthAdjust="spacingAndGlyphs">61.50</text><text x="1169" y="811.1" font-size="21.33" fill="#000" font-family="'Liberation Serif', serif" text-anchor="end" textLength="88.0" lengthAdjust="spacingAndGlyphs">2,720,000</text><text x="1396" y="811.1" font-size="21.33" fill="#000" font-family="'Liberation Serif', serif" text-anchor="end" textLength="110.0" lengthAdjust="spacingAndGlyphs">167,280,000</text><text x="1013" y="843.5" font-size="21.33" fill="#000" font-family="'Liberation Serif', serif" font-weight="bold" text-anchor="end" textLength="65.5" lengthAdjust="spacingAndGlyphs">942.99</text><text x="1396" y="843.5" font-size="21.33" fill="#000" font-family="'Liberation Serif', serif" font-weight="bold" text-anchor="end" textLength="95.5" lengthAdjust="spacingAndGlyphs">2,565,384</text><rect x="1180" y="952" width="1" height="12" fill="#ffffff" /><path d="M174.3 960.6C175.8 959.9 178.5 960 178.3 961.2C178.1 962 177 962.2 176.3 962.9" fill="none" stroke="#000" stroke-width="1.3" /><path d="M213.5 959.5L218 962.5M213.2 962.4H216" fill="none" stroke="#000" stroke-width="1.4" /><path d="M1180.5 963L1183.5 959.5L1186.5 963" fill="none" stroke="#000" stroke-width="1.5" /></svg></div><div id="vscroll" style="position:absolute;left:1895px;top:328px;width:23px;height:636px;background:#e6e6e6;overflow:hidden"><svg width="23" height="636" viewBox="1895 328 23 636" font-family="'Liberation Sans', sans-serif"><rect x="1898" y="349" width="19" height="615" fill="#dadada" /><rect x="1898.5" y="330.5" width="18" height="18" fill="#ffffff" stroke="#d0d0d0" stroke-width="1"/><path d="M1903 343H1912L1907.5 338Z" fill="#606060" /><rect x="1898.5" y="357.5" width="18" height="47" fill="#ffffff" stroke="#a8a8a8" stroke-width="1"/><rect x="1898.5" y="946.5" width="18" height="18" fill="#ffffff" stroke="#d0d0d0" stroke-width="1"/><path d="M1903 953H1912L1907.5 958Z" fill="#606060" /></svg></div><div id="sheettabs" style="position:absolute;left:0px;top:964px;width:1918px;height:33px;background:#e6e6e6;overflow:hidden"><svg width="1918" height="33" viewBox="0 964 1918 33" font-family="'Liberation Sans', sans-serif"><rect x="0" y="964" width="1895" height="1" fill="#9f9f9f" /><path d="M33 974V983L28 978.5Z" fill="#c6c6c6" /><path d="M58 974V983L63 978.5Z" fill="#c6c6c6" /><rect x="103.5" y="964" width="157" height="26" fill="#ffffff" /><rect x="103" y="964" width="1" height="26" fill="#c6c6c6" /><rect x="260" y="964" width="1" height="26" fill="#c6c6c6" /><rect x="103" y="987" width="158" height="3" fill="#217346" /><text x="115.5" y="981.5" font-size="16.5" fill="#217346" font-weight="bold" textLength="134" lengthAdjust="spacingAndGlyphs">Lần 3 - 15-06-16</text><circle cx="304" cy="978.5" r="9.5" fill="none" stroke="#777" stroke-width="1.2"/><path d="M299 978.5H309M304 973.5V983.5" fill="none" stroke="#666" stroke-width="1.6" /><rect x="1149" y="972.5" width="2.5" height="2.5" fill="#a0a0a0" /><rect x="1149" y="977.5" width="2.5" height="2.5" fill="#a0a0a0" /><rect x="1149" y="982.5" width="2.5" height="2.5" fill="#a0a0a0" /><rect x="1167.5" y="969.5" width="726" height="18" fill="#d9d9d9" /><rect x="1167.5" y="969.5" width="18" height="18" fill="#ffffff" stroke="#d0d0d0" stroke-width="1"/><path d="M1180 974V983L1175 978.5Z" fill="#606060" /><rect x="1186.5" y="969.5" width="634" height="18" fill="#ffffff" stroke="#a8a8a8" stroke-width="1"/><rect x="1876.5" y="969.5" width="18" height="18" fill="#ffffff" stroke="#d0d0d0" stroke-width="1"/><path d="M1883 974V983L1888 978.5Z" fill="#606060" /><rect x="0" y="993" width="1918" height="1" fill="#c8c8c8" /><rect x="0" y="994" width="1918" height="3" fill="#f3f3f3" /><rect x="1580" y="994" width="42" height="3" fill="#c8c8c8" /></svg></div></div></body></html>
